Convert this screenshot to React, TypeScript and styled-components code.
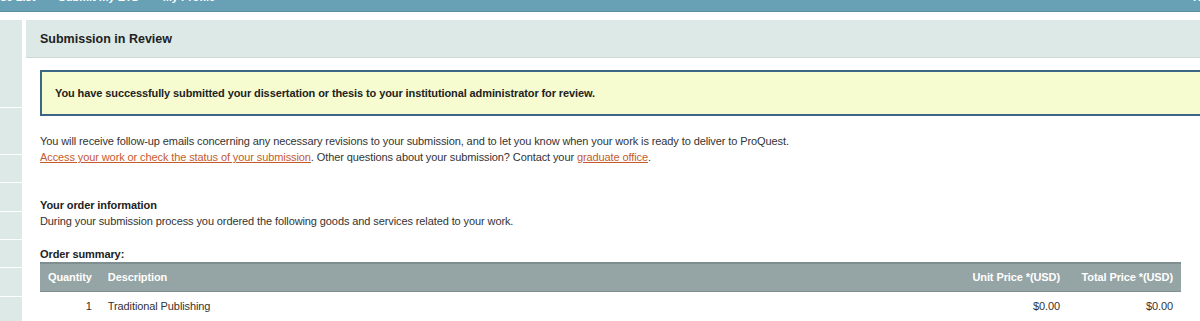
import React from 'react';
import styled, {createGlobalStyle} from 'styled-components';

const GlobalStyle = createGlobalStyle`
  html, body {
    margin: 0;
    padding: 0;
    background: #ffffff;
    font-family: "Liberation Sans", Arial, sans-serif;
    color: #333333;
  }
`;

const navItems = ['Browse List', 'Submit my ETD', 'My Profile'];
const sideRows = [88, 47, 28, 29, 28, 28, 29, 28];

const orders = [
  {qty: 1, description: 'Traditional Publishing', unit: '$0.00', total: '$0.00'},
];

export default function App() {
  return (
    <>
      <GlobalStyle/>
      <NavBar>
        <NavList>
          {navItems.map(item => <NavItem key={item}>{item}</NavItem>)}
        </NavList>
        <NavUser>Hi</NavUser>
      </NavBar>
      <Layout>
        <Sidebar>
          {sideRows.map((h, i) => <SideRow key={i} h={h}/>)}
        </Sidebar>
        <Main>
          <PanelHeader>Submission in Review</PanelHeader>
          <Content>
            <Notice>
              You have successfully submitted your dissertation or thesis to your institutional administrator for review.
            </Notice>
            <Para>
              You will receive follow-up emails concerning any necessary revisions to your submission, and to let you know when your work is ready to deliver to ProQuest.
              <br/>
              <Link href="#">Access your work or check the status of your submission</Link>. Other questions about your submission? Contact your <Link href="#">graduate office</Link>.
            </Para>
            <Section>
              <SectionTitle>Your order information</SectionTitle>
              <Text>During your submission process you ordered the following goods and services related to your work.</Text>
            </Section>
            <SummaryTitle>Order summary:</SummaryTitle>
            <OrderTable>
              <thead>
                <tr>
                  <Th align="right" w={58}>Quantity</Th>
                  <Th align="left">Description</Th>
                  <Th align="right" w={104}>Unit Price *(USD)</Th>
                  <Th align="right" w={113}>Total Price *(USD)</Th>
                </tr>
              </thead>
              <tbody>
                {orders.map(o => (
                  <tr key={o.description}>
                    <Td align="right">{o.qty}</Td>
                    <Td align="left">{o.description}</Td>
                    <Td align="right">{o.unit}</Td>
                    <Td align="right">{o.total}</Td>
                  </tr>
                ))}
              </tbody>
            </OrderTable>
          </Content>
        </Main>
      </Layout>
    </>
  );
}

const NavBar = styled.div`
  height: 11px;
  background: #68a0b6;
  border-bottom: 1px solid #5a8ea3;
  display: flex;
  justify-content: space-between;
  overflow: hidden;
`;

const NavList = styled.div`
  display: flex;
  gap: 23px;
  margin-left: -27px;
  margin-top: -11px;
`;

const NavItem = styled.span`
  color: #ffffff;
  font-weight: bold;
  font-size: 11px;
  line-height: 16px;
`;

const NavUser = styled(NavItem)`
  margin-top: -11px;
  margin-right: -4px;
`;

const Layout = styled.div`
  display: flex;
  margin-top: 8px;
  height: 301px;
  overflow: hidden;
`;

const Sidebar = styled.div`
  width: 22px;
  flex-shrink: 0;
  display: flex;
  flex-direction: column;
`;

const SideRow = styled.div<{h: number}>`
  height: ${p => p.h - 1}px;
  flex-shrink: 0;
  background: #dde9e6;
  border-bottom: 1px solid #ffffff;
`;

const Main = styled.div`
  flex: 1;
  margin-left: 4px;
  min-width: 0;
`;

const PanelHeader = styled.div`
  height: 37px;
  background: #dce9e6;
  border-bottom: 1px solid #cdd9d6;
  padding-left: 14px;
  display: flex;
  align-items: center;
  font-size: 12.5px;
  font-weight: bold;
  color: #222222;
`;

const Content = styled.div`
  padding: 12px 0 0 14px;
  font-size: 11px;
  letter-spacing: -0.1px;
`;

const Notice = styled.div`
  height: 42px;
  margin-right: -20px;
  background: #f7fcd0;
  border: 2px solid #3b6787;
  display: flex;
  align-items: center;
  padding-left: 13px;
  font-weight: bold;
  color: #222222;
`;

const Para = styled.p`
  margin: 17px 0 0;
  line-height: 16px;
  color: #333333;
`;

const Link = styled.a`
  color: #c65a2e;
  text-decoration: underline;
`;

const Section = styled.div`
  margin-top: 32px;
`;

const SectionTitle = styled.div`
  font-weight: bold;
  line-height: 16px;
  color: #222222;
`;

const Text = styled.div`
  line-height: 16px;
  color: #333333;
`;

const SummaryTitle = styled(SectionTitle)`
  margin-top: 17px;
`;

const OrderTable = styled.table`
  width: 1141px;
  border-collapse: collapse;
  font-size: 11px;
`;

const Th = styled.th<{align: 'left' | 'right'; w?: number}>`
  box-sizing: border-box;
  background: #95a4a4;
  border-top: 2px solid #7f8f8f;
  border-bottom: 1px solid #7f8f8f;
  height: 28px;
  padding: 0 8px;
  text-align: ${p => p.align};
  width: ${p => (p.w ? `${p.w}px` : 'auto')};
  color: #ffffff;
  font-weight: bold;
  white-space: nowrap;
`;

const Td = styled.td<{align: 'left' | 'right'}>`
  height: 28px;
  padding: 0 8px;
  text-align: ${p => p.align};
  color: #333333;
  white-space: nowrap;
`;
